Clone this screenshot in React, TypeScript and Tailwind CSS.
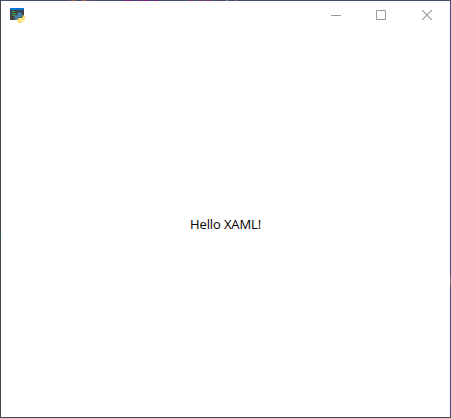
function PythonWindowIcon() {
  return (
    <svg width="17" height="17" viewBox="0 0 17 17" aria-hidden="true">
      <path d="M1 1h14v12H1z" fill="#404346" />
      <path d="M1 1h14v2H1z" fill="#0474d0" />
      <path d="M3 4.5h3M3 6.5h4M3 8.5h3" stroke="#36a852" />
      <path
        d="M8 7Q8 5.3 10.4 5.3Q13 5.3 13 7.2V9.2Q13 10.6 11.6 10.6H9.4Q8 10.6 8 12V13H7.2Q5.3 13 5.3 10.6Q5.3 8.3 7.2 8.3H10V7.8H8Z"
        fill="#4383b4"
      />
      <path
        d="M13.6 8.3H14.4Q16.2 8.5 16.2 10.9Q16.2 13.4 14.4 13.4H11V13.9H13.6V14.4Q13.6 16 11 16Q8.4 16 8.4 14.4V12.4Q8.4 11.1 9.7 11.1H12.2Q13.6 11.1 13.6 9.7Z"
        fill="#ffde70"
      />
    </svg>
  );
}

const topSpecks = [
  { left: 71, width: 4, color: "#94634f" },
  { left: 76, width: 1, color: "#88426a" },
  { left: 81, width: 5, color: "#94634f" },
  { left: 90, width: 2, color: "#805b5b" },
  { left: 125, width: 6, color: "#881b88" },
  { left: 133, width: 2, color: "#742578" },
  { left: 138, width: 3, color: "#881b88" },
  { left: 143, width: 6, color: "#881b88" },
  { left: 154, width: 4, color: "#742578" },
  { left: 188, width: 5, color: "#7b3e72" },
  { left: 198, width: 5, color: "#7b3e72" },
  { left: 206, width: 6, color: "#7b3e72" },
  { left: 216, width: 2, color: "#683d72" },
  { left: 226, width: 2, color: "#798391" },
  { left: 235, width: 2, color: "#806d88" },
];

export default function App() {
  return (
    <div className="relative flex h-[418px] w-[451px] flex-col border border-t-[#414d73] border-r-[#414d73] border-b-[#444346] border-l-[#444346] bg-white">
      <header className="flex h-[30px] shrink-0 items-start justify-between">
        <div className="pt-[6px] pl-2">
          <PythonWindowIcon />
        </div>
        <div className="flex text-[#999999]">
          <button aria-label="Minimize" className="flex h-[29px] w-[46px] items-center justify-center">
            <svg width="10" height="11" viewBox="0 0 10 11">
              <path d="M0 5.5H10" stroke="currentColor" />
            </svg>
          </button>
          <button aria-label="Maximize" className="flex h-7 w-11 items-center justify-center">
            <svg width="10" height="10" viewBox="0 0 10 10">
              <path d="M.5.5h9v9h-9z" fill="none" stroke="currentColor" />
            </svg>
          </button>
          <button aria-label="Close" className="flex h-7 w-[47px] items-center justify-center pl-px">
            <svg width="10" height="10" viewBox="0 0 10 10">
              <path d="M0 0L10 10M10 0L0 10" stroke="currentColor" strokeWidth="1.2" />
            </svg>
          </button>
        </div>
      </header>
      <main className="flex flex-1 items-center justify-center font-['Open_Sans','Noto_Sans',sans-serif] text-[13px] leading-5 tracking-[-0.12px] text-black">
        <span>Hello XAML!</span>
      </main>
      {topSpecks.map((s) => (
        <i
          key={s.left}
          className="absolute -top-px h-px"
          style={{ left: s.left - 1, width: s.width, backgroundColor: s.color }}
        />
      ))}
      <i className="absolute top-[232px] -left-px h-[6px] w-px bg-[#285c41]" />
      <i className="absolute top-[276px] -right-px h-[9px] w-px bg-[#776b82]" />
    </div>
  );
}
